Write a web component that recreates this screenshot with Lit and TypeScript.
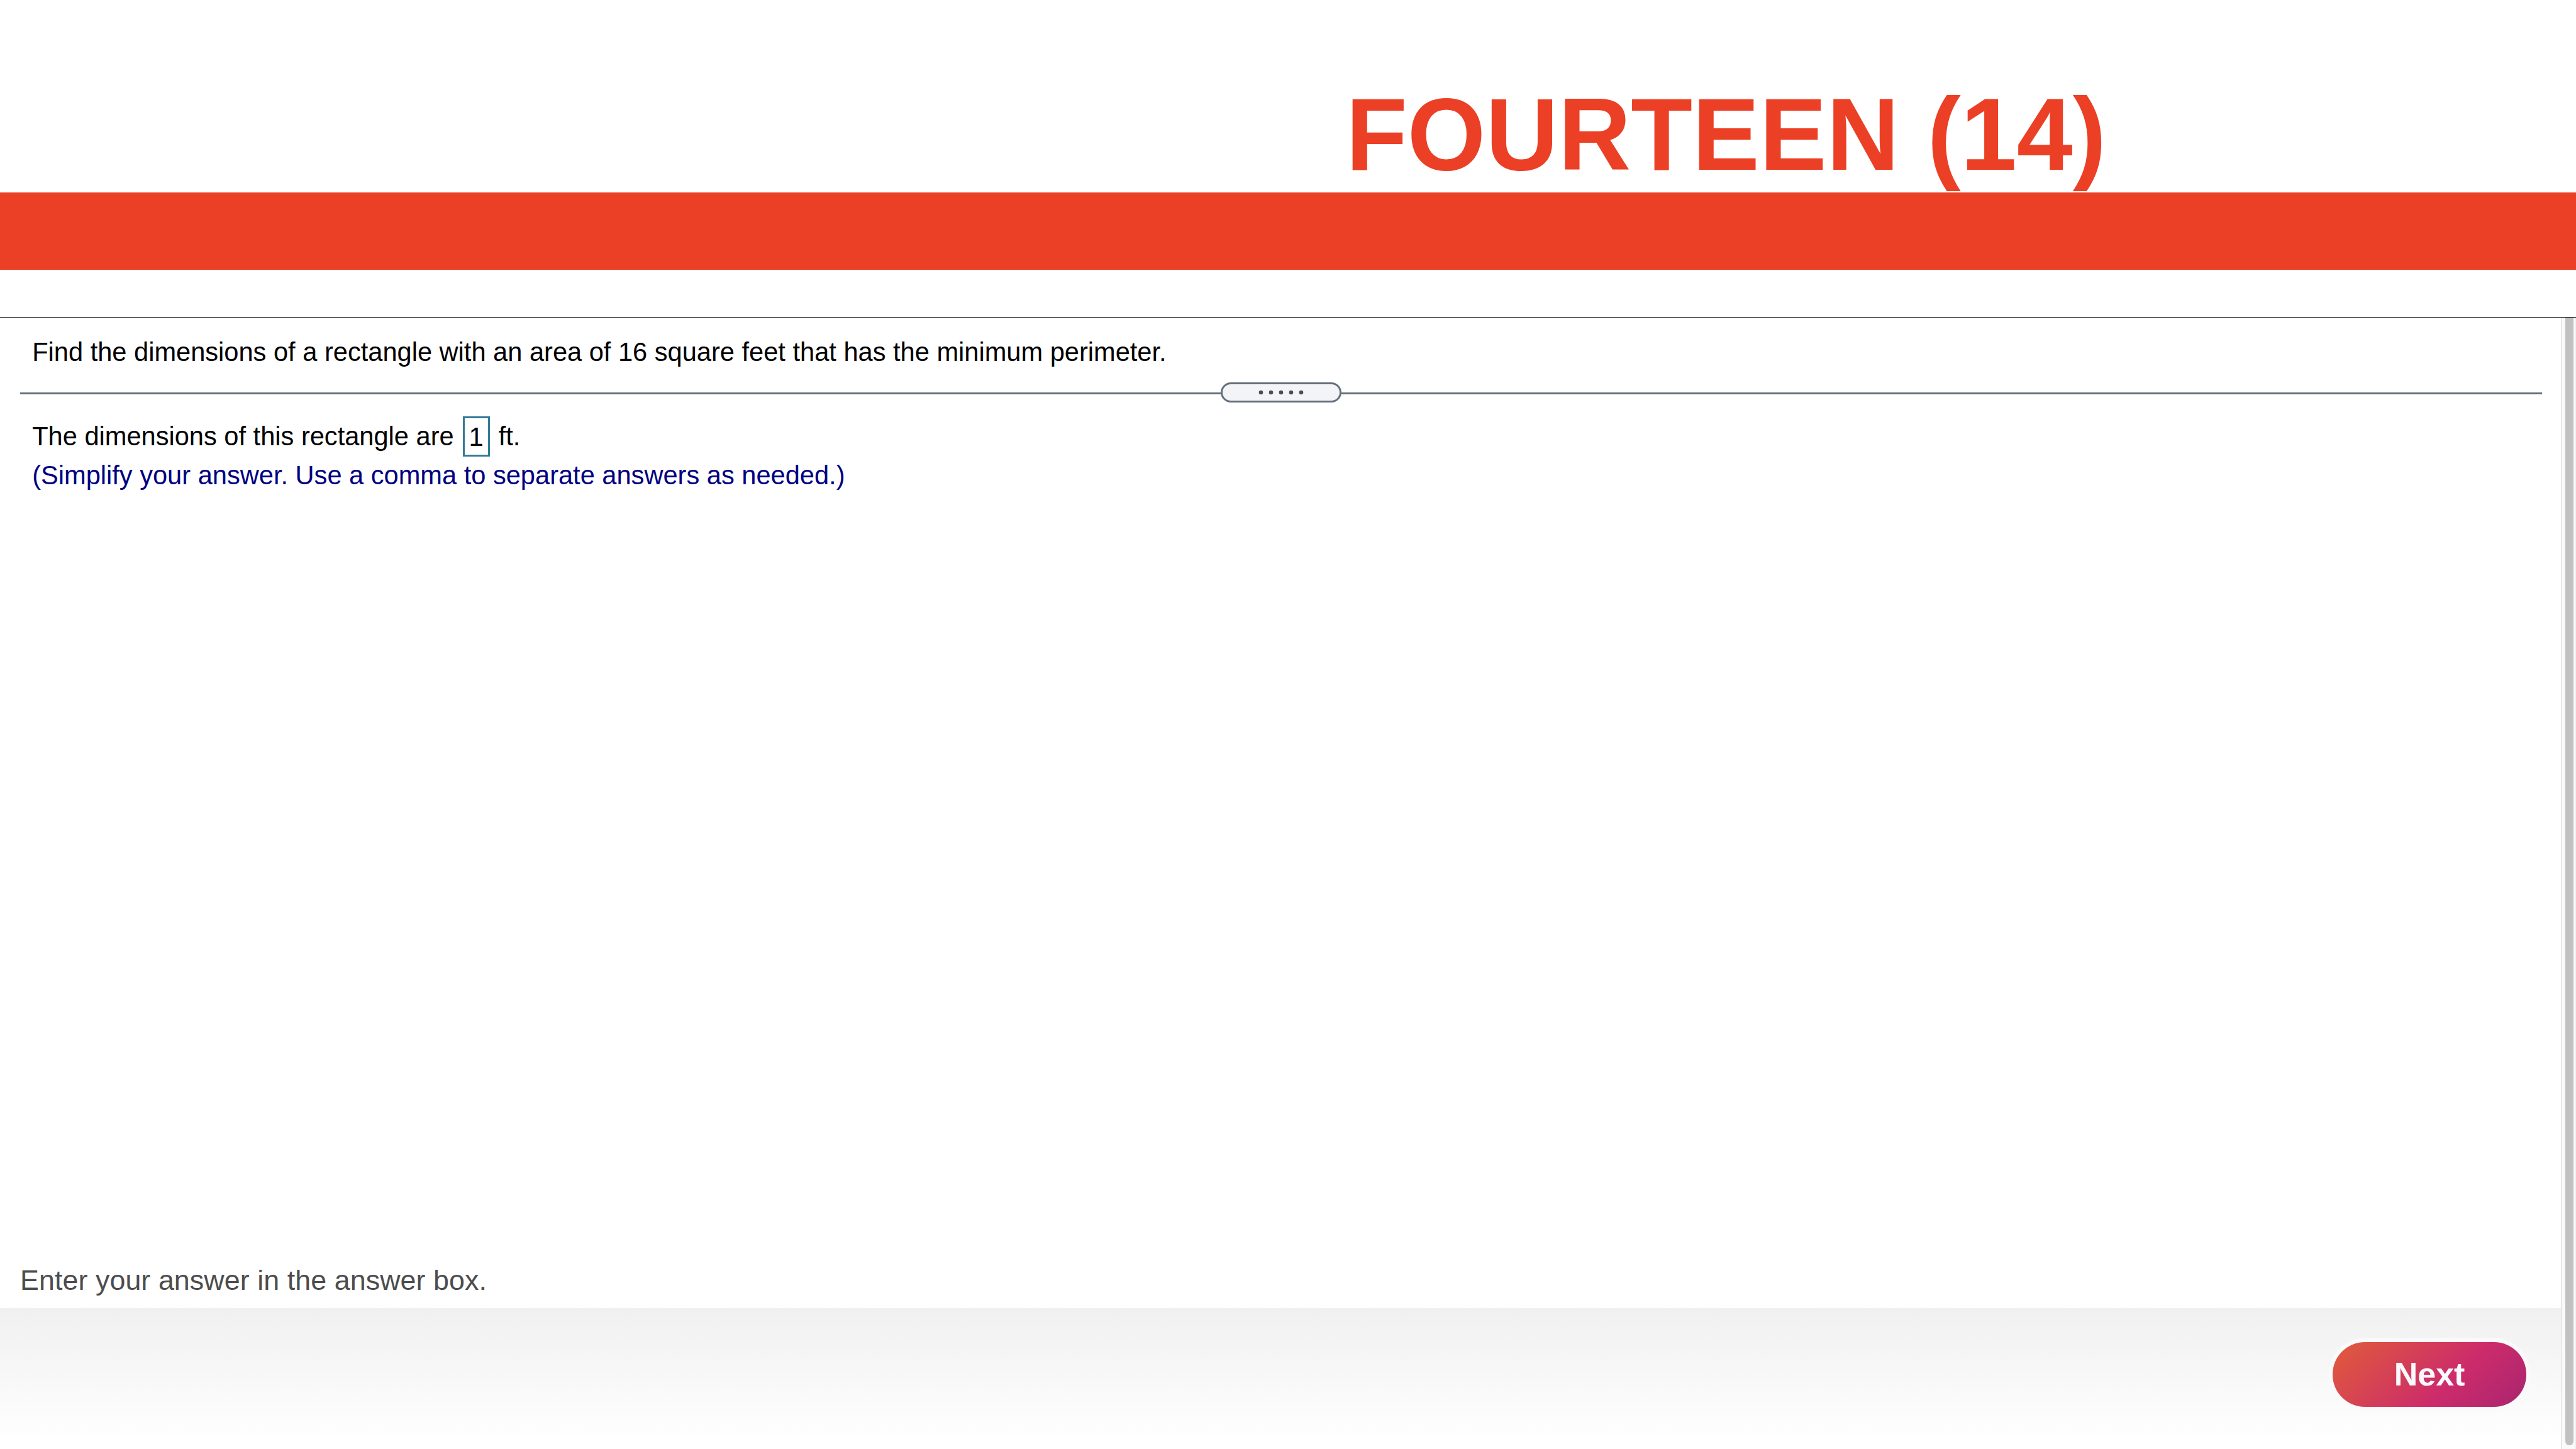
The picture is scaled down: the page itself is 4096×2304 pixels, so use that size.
import { LitElement, html, css, svg } from 'lit';
import { customElement, property } from 'lit/decorators.js';

@customElement('title-banner')
export class TitleBanner extends LitElement {
  static styles = css`
    :host {
      display: block;
      height: 504px;
    }
    .title {
      height: 305.6px;
      box-sizing: border-box;
      padding: 115.2px 0 0 2140px;
    }
    h1 {
      margin: 0;
      font-size: 160px;
      line-height: 200px;
      font-weight: 700;
      color: #eb4025;
      white-space: nowrap;
      transform: scaleY(1.02);
      transform-origin: 0 155.2px;
    }
    .stripe {
      height: 123.2px;
      background: #eb4025;
    }
  `;

  @property() heading = '';

  render() {
    return html`
      <div class="title"><h1>${this.heading}</h1></div>
      <div class="stripe"></div>
    `;
  }
}

@customElement('split-divider')
export class SplitDivider extends LitElement {
  static styles = css`
    :host {
      display: flex;
      align-items: center;
      height: 32px;
    }
    .line {
      flex: 1;
      height: 3px;
      margin-top: 3px;
      background: #636f7b;
    }
    .line.left {
      flex: 0 0 1909px;
    }
    .handle {
      display: flex;
      align-items: center;
      justify-content: center;
      box-sizing: border-box;
      width: 192px;
      height: 32px;
      border: 3px solid #636f7b;
      border-radius: 16px;
      background: #f3f4f7;
    }
    svg {
      display: block;
    }
  `;

  render() {
    return html`
      <div class="line left"></div>
      <div class="handle">
        <svg width="72" height="8" viewBox="0 0 72 8" fill="#4d4d4d">
          ${[4, 20, 36, 52, 68].map((x) => svg`<circle cx=${x} cy="4" r="3.3" />`)}
        </svg>
      </div>
      <div class="line"></div>
    `;
  }
}

@customElement('app-root')
export class AppRoot extends LitElement {
  static styles = css`
    :host {
      display: flex;
      flex-direction: column;
      width: 4096px;
      height: 2304px;
      overflow: hidden;
      background: #ffffff;
      font-family: 'Liberation Sans', Arial, sans-serif;
    }
    title-banner {
      flex: none;
    }
    .panel {
      flex: 1;
      display: flex;
      min-height: 0;
      border-top: 1px solid #1a1a1a;
    }
    .main {
      flex: 1;
      display: flex;
      flex-direction: column;
    }
    .exercise {
      flex: 1;
      display: flex;
      flex-direction: column;
    }
    p {
      margin: 0;
      padding-left: 51.2px;
      font-size: 41.6px;
      line-height: 60px;
      color: #000000;
      white-space: nowrap;
    }
    .question {
      padding-top: 25px;
    }
    split-divider {
      flex: none;
      margin: 18px 30.4px 0 32px;
    }
    .answer {
      display: flex;
      align-items: center;
      height: 64px;
      margin-top: 22.4px;
      line-height: 62px;
    }
    .box {
      box-sizing: border-box;
      width: 43px;
      height: 64px;
      margin: 0 14px 0 14px;
      border: 3px solid #347b98;
      line-height: 60px;
      text-align: center;
    }
    .note {
      color: #000080;
    }
    .hint {
      margin-top: auto;
      padding: 0 0 15px 32px;
      font-size: 44.8px;
      letter-spacing: 0.07px;
      color: #4d4d4d;
    }
    .footer {
      display: flex;
      justify-content: flex-end;
      box-sizing: border-box;
      height: 224px;
      padding: 54.4px 55.4px 0 0;
      background: linear-gradient(#f0f0f0, #ffffff 94%);
    }
    button {
      width: 307.2px;
      height: 102.4px;
      padding: 0;
      border: none;
      border-radius: 51.2px;
      box-shadow: 0 0 0 6.4px #fafafa;
      background: linear-gradient(135deg, #e05c3a, #cc2b6b 62%, #a8256f);
      color: #f9fafe;
      font-family: inherit;
      font-size: 52px;
      font-weight: 700;
      line-height: 103px;
    }
    .scrollbar {
      display: flex;
      box-sizing: border-box;
      width: 24px;
      padding: 0 3px 6.4px 5px;
      border-left: 2px solid #e8e8e8;
      border-right: 1px solid #ededed;
      background: #fafafa;
    }
    .thumb {
      flex: 1;
      border-radius: 0 0 6.4px 6.4px;
      background: #c1c1c1;
    }
  `;

  render() {
    return html`
      <title-banner heading="FOURTEEN (14)"></title-banner>
      <section class="panel">
        <div class="main">
          <div class="exercise">
            <p class="question">
              Find the dimensions of a rectangle with an area of 16 square feet that has the minimum perimeter.
            </p>
            <split-divider></split-divider>
            <p class="answer">
              <span>The dimensions of this rectangle are</span>
              <span class="box">1</span>
              <span>ft.</span>
            </p>
            <p class="note">(Simplify your answer. Use a comma to separate answers as needed.)</p>
            <p class="hint">Enter your answer in the answer box.</p>
          </div>
          <footer class="footer">
            <button type="button">Next</button>
          </footer>
        </div>
        <div class="scrollbar"><div class="thumb"></div></div>
      </section>
    `;
  }
}
